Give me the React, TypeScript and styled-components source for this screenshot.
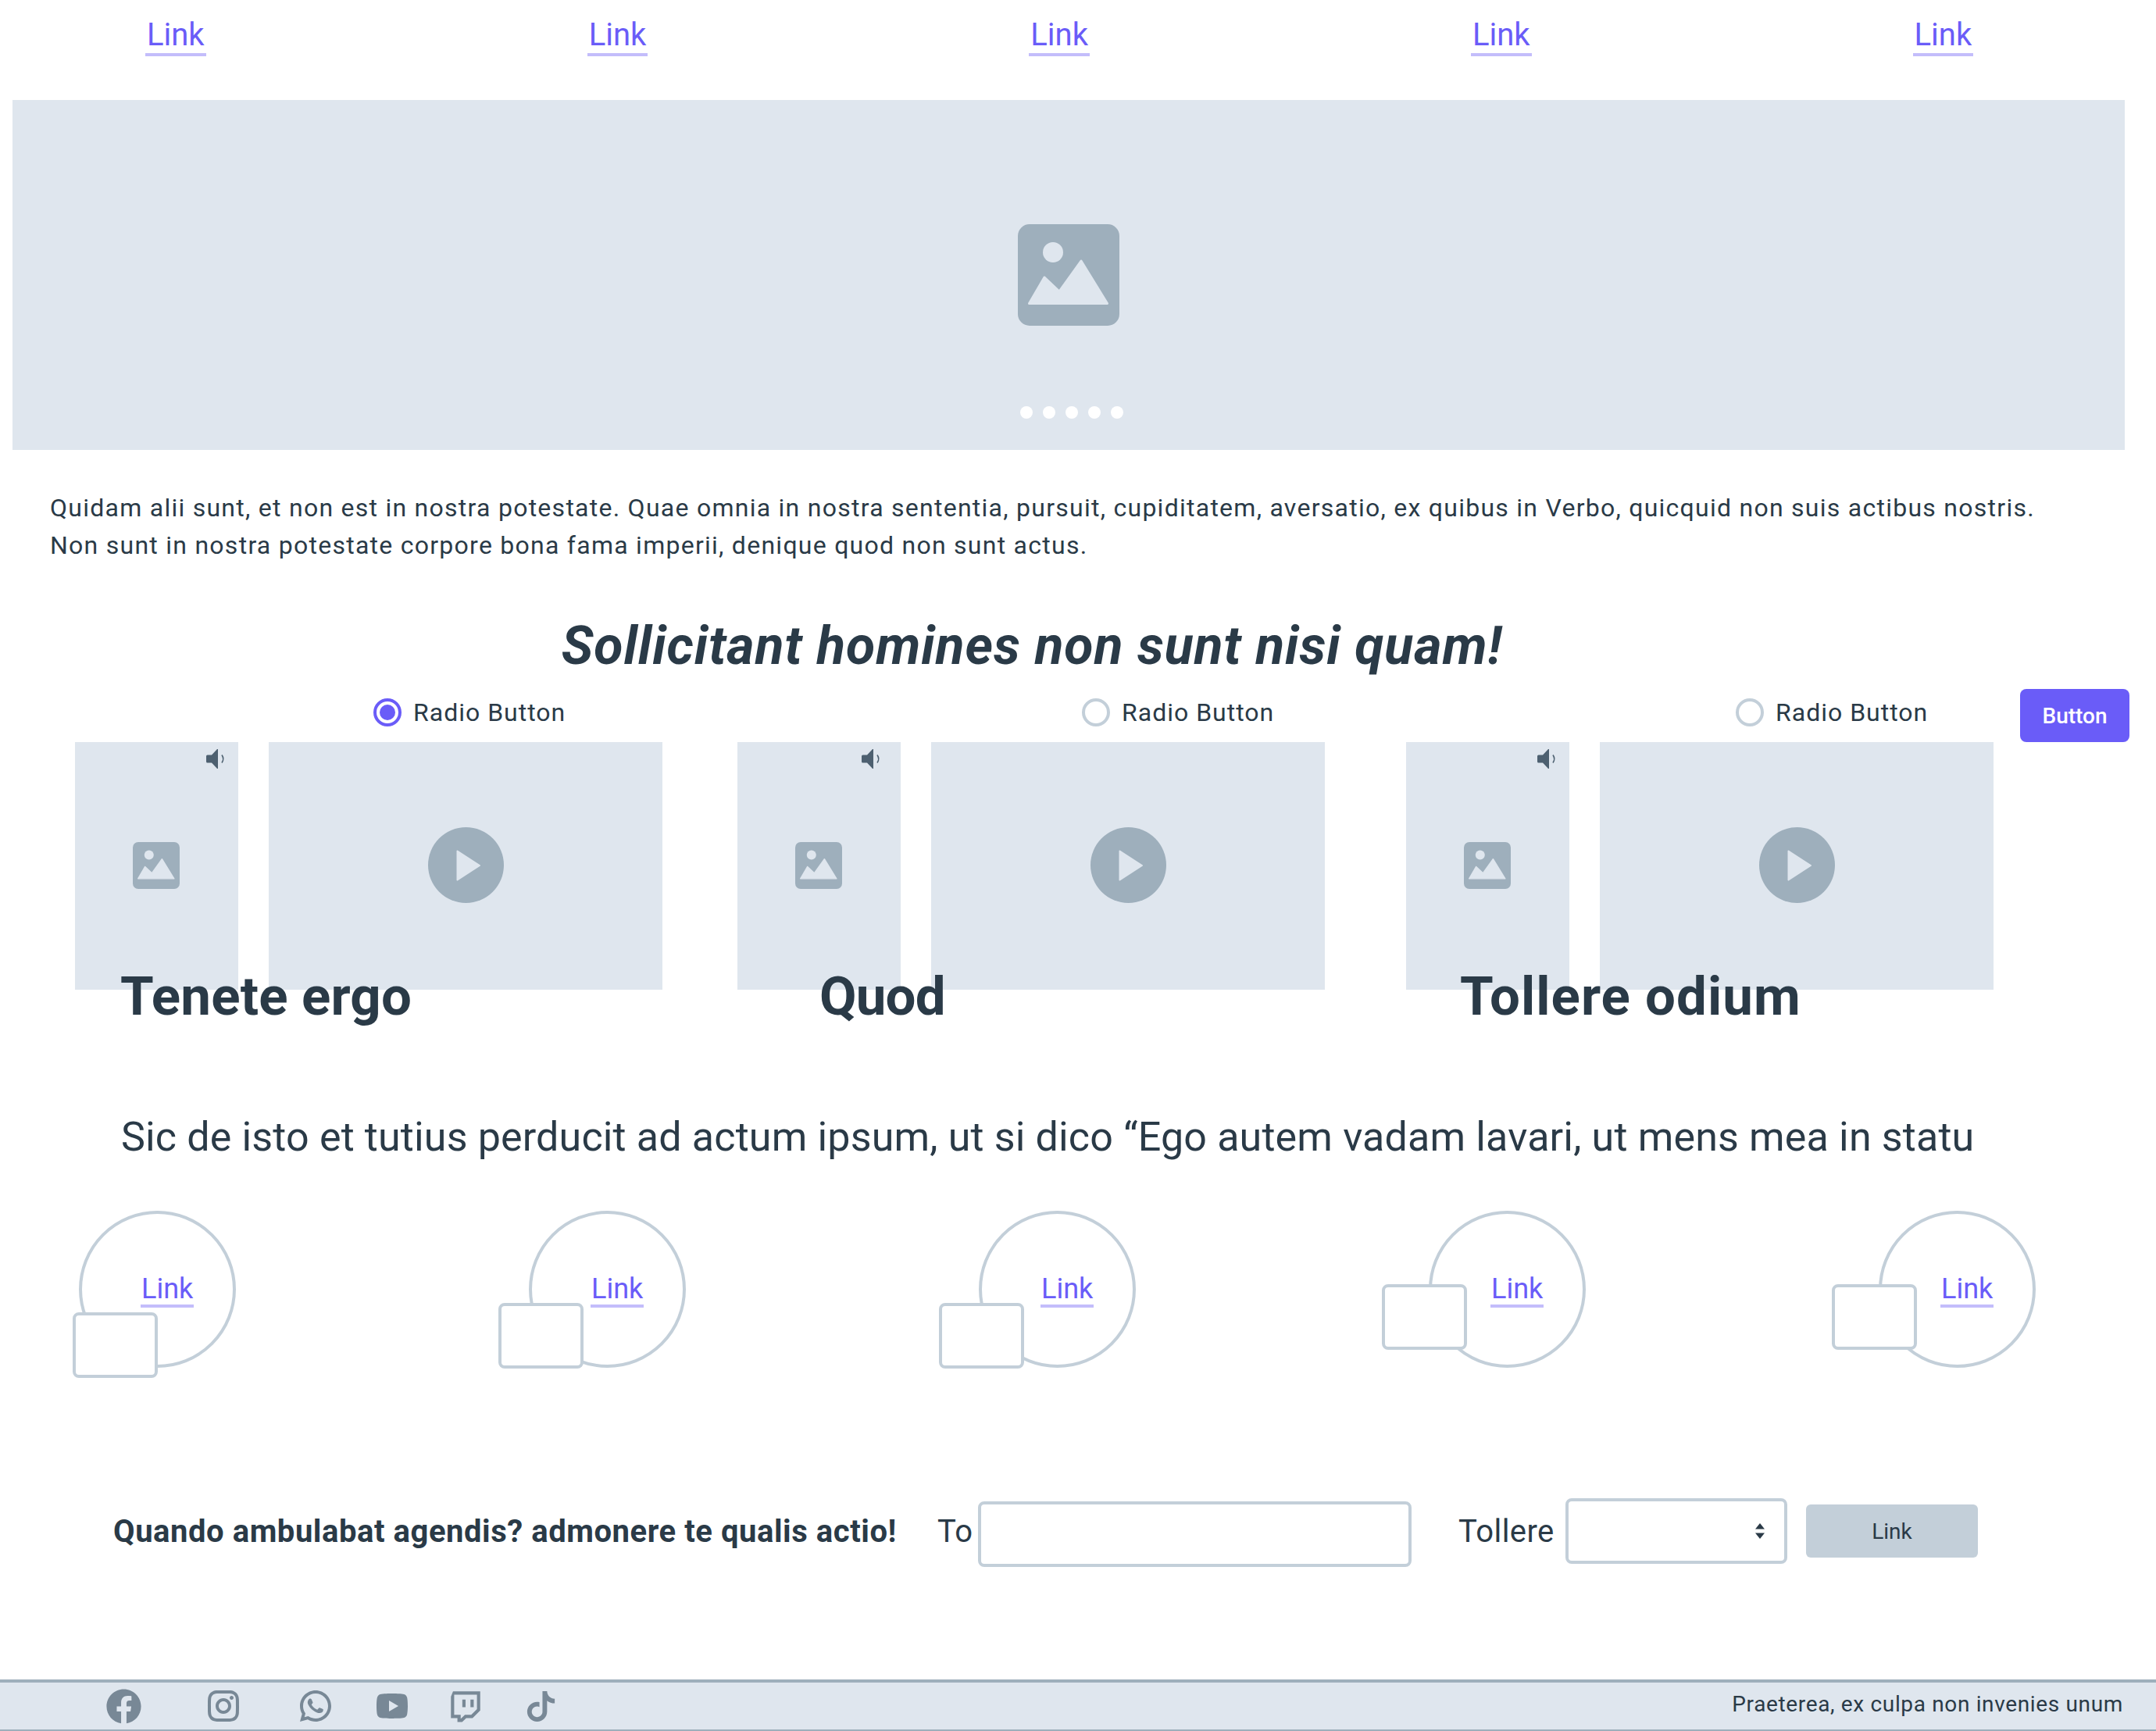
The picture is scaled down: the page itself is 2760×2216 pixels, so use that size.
import React from "react";
import styled, { createGlobalStyle } from "styled-components";
import {
  RiFacebookCircleFill,
  RiInstagramLine,
  RiWhatsappLine,
  RiYoutubeFill,
  RiTwitchLine,
  RiTiktokFill,
} from "react-icons/ri";

const INK = "#2a3a47";
const ACCENT = "#6a5cf8";
const UNDER = "#c3bdfb";
const PANEL = "#dfe6ee";
const ICON = "#9eafbc";
const LINE = "#c3cfd9";

const Global = createGlobalStyle`
  html, body { margin: 0; padding: 0; background: #fff; }
  body { font-family: Roboto, "Liberation Sans", sans-serif; color: ${INK}; }
  * { box-sizing: border-box; }
`;

const Page = styled.div`
  width: 2760px;
  height: 2216px;
  overflow: hidden;
  display: flex;
  flex-direction: column;
`;

const TextLink = styled.a`
  display: inline-block;
  color: ${ACCENT};
  font-size: 40px;
  line-height: 44px;
  padding: 0 2px 1px;
  border-bottom: 4px solid ${UNDER};
  text-align: center;
  text-decoration: none;
`;

const BadgeLink = styled(TextLink)`
  font-size: 36px;
  line-height: 40px;
  padding: 2px 1px 0;
`;

const TopNav = styled.nav`
  height: 128px;
  padding: 23px 0 0 186px;
  display: flex;
  gap: 488px;
  align-items: flex-start;
`;

const Hero = styled.section`
  position: relative;
  margin-left: 16px;
  width: 2704px;
  height: 448px;
  background: ${PANEL};
  display: flex;
  align-items: center;
  justify-content: center;
`;

const HeroDots = styled.div`
  position: absolute;
  left: 1290px;
  bottom: 40px;
  display: flex;
  gap: 13px;
`;

const Dot = styled.span`
  width: 16px;
  height: 16px;
  border-radius: 50%;
  background: #fff;
`;

const Intro = styled.p`
  margin: 50px 0 0 64px;
  width: 2600px;
  font-size: 32px;
  line-height: 48px;
  letter-spacing: 1.26px;
`;

const Headline = styled.h1`
  margin: 65px 0 0;
  padding-right: 118px;
  text-align: center;
  font-size: 68px;
  line-height: 80px;
  font-weight: 700;
  font-style: italic;
  letter-spacing: 0.9px;
`;

const ChoiceRow = styled.div`
  margin-top: 15px;
  padding-left: 478px;
  height: 68px;
  display: grid;
  grid-template-columns: 907px 837px 364px 140px;
`;

const Choice = styled.label`
  display: flex;
  align-items: center;
  gap: 15px;
  height: 60px;
  font-size: 32px;
  letter-spacing: 1px;
`;

const RadioMark = styled.span<{ $on?: boolean }>`
  width: 36px;
  height: 36px;
  border-radius: 50%;
  border: 4px solid ${(p) => (p.$on ? ACCENT : LINE)};
  display: flex;
  align-items: center;
  justify-content: center;
  &::after {
    content: "";
    width: 20px;
    height: 20px;
    border-radius: 50%;
    background: ${(p) => (p.$on ? ACCENT : "transparent")};
  }
`;

const PrimaryButton = styled.button`
  width: 140px;
  height: 68px;
  border: 0;
  border-radius: 8px;
  background: ${ACCENT};
  color: #fff;
  font-family: inherit;
  font-size: 28px;
  font-weight: 500;
`;

const GroupRow = styled.div`
  padding-left: 96px;
  display: grid;
  grid-template-columns: 848px 856px 752px;
`;

const Group = styled.article``;

const PanelPair = styled.div`
  display: flex;
  gap: 39px;
`;

const ThumbPanel = styled.div`
  position: relative;
  width: 209px;
  height: 317px;
  padding: 0 2px 2px 0;
  background: ${PANEL};
  display: flex;
  align-items: center;
  justify-content: center;
`;

const VideoPanel = styled.div`
  width: 504px;
  height: 317px;
  padding-bottom: 2px;
  background: ${PANEL};
  display: flex;
  align-items: center;
  justify-content: center;
`;

const SoundBadge = styled.span<{ $right: number }>`
  position: absolute;
  top: 9px;
  right: ${(p) => p.$right}px;
  display: flex;
`;

const PlayCircle = styled.span`
  width: 97px;
  height: 97px;
  border-radius: 50%;
  background: ${ICON};
  display: flex;
  align-items: center;
  justify-content: center;
`;

const GroupTitle = styled.h2<{ $indent: number; $track: number }>`
  position: relative;
  margin: -33px 0 0 ${(p) => p.$indent}px;
  font-size: 69px;
  line-height: 84px;
  font-weight: 700;
  letter-spacing: ${(p) => p.$track}px;
`;

const Lead = styled.p`
  margin: 102px 0 0 155px;
  font-size: 52px;
  line-height: 72px;
  white-space: nowrap;
  letter-spacing: 0.16px;
`;

const BadgeRow = styled.div`
  margin-top: 58px;
  padding-left: 101px;
  display: flex;
  gap: 375px;
`;

const Badge = styled.div`
  position: relative;
  width: 201px;
  height: 201px;
  border: 4px solid ${LINE};
  border-radius: 50%;
  padding-left: 75px;
  display: flex;
  align-items: center;
`;

const BadgeCard = styled.div<{ $x: number; $y: number }>`
  position: absolute;
  left: ${(p) => p.$x}px;
  top: ${(p) => p.$y}px;
  width: 109px;
  height: 84px;
  background: #fff;
  border: 4px solid ${LINE};
  border-radius: 8px;
`;

const QuoteForm = styled.form`
  margin-top: 165px;
  padding-left: 145px;
  display: flex;
  align-items: center;
  height: 88px;
`;

const FormTitle = styled.strong`
  width: 1055px;
  font-size: 40px;
  font-weight: 700;
  letter-spacing: 0.55px;
`;

const FieldLabel = styled.label<{ $w: number }>`
  width: ${(p) => p.$w}px;
  font-size: 40px;
  letter-spacing: 0.4px;
`;

const TextField = styled.input`
  width: 555px;
  height: 84px;
  margin: 8px 60px 0 0;
  border: 4px solid ${LINE};
  border-radius: 8px;
  background: #fff;
`;

const SelectWrap = styled.div`
  position: relative;
  width: 284px;
  height: 84px;
  margin-right: 24px;
`;

const SelectField = styled.select`
  width: 100%;
  height: 100%;
  appearance: none;
  border: 4px solid ${LINE};
  border-radius: 8px;
  background: #fff;
`;

const SelectArrows = styled.svg`
  position: absolute;
  right: 28px;
  top: 31px;
  pointer-events: none;
`;

const GhostButton = styled.button`
  width: 220px;
  height: 68px;
  border: 0;
  border-radius: 6px;
  background: ${LINE};
  color: ${INK};
  font-family: inherit;
  font-size: 28px;
`;

const Footer = styled.footer`
  margin-top: auto;
  height: 66px;
  border-top: 4px solid ${ICON};
  border-bottom: 2px solid ${ICON};
  background: ${PANEL};
  padding: 0 42px 0 132px;
  display: flex;
  align-items: center;
  justify-content: space-between;
`;

const SocialList = styled.div`
  display: flex;
  align-items: center;
  color: #788896;
`;

const SocialSlot = styled.span<{ $w: number }>`
  width: ${(p) => p.$w}px;
  display: flex;
`;

const FooterNote = styled.span`
  margin-bottom: 6px;
  font-size: 28px;
  letter-spacing: 0.65px;
`;

const ImageGlyph = ({ size }: { size: number }) => (
  <svg width={size} height={size} viewBox="0 0 130 130" aria-hidden="true">
    <rect width="130" height="130" rx="15" fill={ICON} />
    <circle cx="45" cy="36" r="13" fill={PANEL} />
    <path
      d="M14.5 101.5 L34 68 L53 86 L81 47 L114.5 101.5 Z"
      fill={PANEL}
      stroke={PANEL}
      strokeWidth="3"
      strokeLinejoin="round"
    />
  </svg>
);

const SpeakerGlyph = () => (
  <svg width="25" height="25" viewBox="0 0 25 25" aria-hidden="true">
    <path d="M0 9 Q0 7.5 1.5 7.5 H7 L14 0 H15 V25 H14 L7 17.5 H1.5 Q0 17.5 0 16 Z" fill="#4d6070" />
    <path d="M20 7.5 Q23.5 12.5 20 17.5" fill="none" stroke="#4d6070" strokeWidth="1.6" />
  </svg>
);

const PlayGlyphSvg = styled.svg`
  margin-left: 8px;
`;

const PlayGlyph = () => (
  <PlayGlyphSvg width="32" height="40" viewBox="0 0 32 40" aria-hidden="true">
    <path d="M1.5 1.5 L30 20 L1.5 38.5 Z" fill={PANEL} stroke={PANEL} strokeWidth="2" strokeLinejoin="round" />
  </PlayGlyphSvg>
);

const groups = [
  { title: "Tenete ergo", indent: 58, sound: 16, track: 0.2 },
  { title: "Quod", indent: 105, sound: 25, track: -0.8 },
  { title: "Tollere odium", indent: 69, sound: 16, track: 1.05 },
];

const badges = [
  { x: -12, y: 126 },
  { x: -43, y: 114 },
  { x: -55, y: 114 },
  { x: -64, y: 90 },
  { x: -64, y: 90 },
];

const socials = [
  { Icon: RiFacebookCircleFill, w: 130, size: 53 },
  { Icon: RiInstagramLine, w: 118, size: 48 },
  { Icon: RiWhatsappLine, w: 98, size: 48 },
  { Icon: RiYoutubeFill, w: 93, size: 48 },
  { Icon: RiTwitchLine, w: 98, size: 50 },
  { Icon: RiTiktokFill, w: 52, size: 47 },
];

export default function App() {
  return (
    <Page>
      <Global />
      <TopNav>
        {[0, 1, 2, 3, 4].map((i) => (
          <TextLink key={i} href="#">
            Link
          </TextLink>
        ))}
      </TopNav>
      <Hero>
        <ImageGlyph size={130} />
        <HeroDots>
          {[0, 1, 2, 3, 4].map((i) => (
            <Dot key={i} />
          ))}
        </HeroDots>
      </Hero>
      <Intro>
        Quidam alii sunt, et non est in nostra potestate. Quae omnia in nostra sententia, pursuit, cupiditatem,
        aversatio, ex quibus in Verbo, quicquid non suis actibus nostris. Non sunt in nostra potestate corpore bona
        fama imperii, denique quod non sunt actus.
      </Intro>
      <Headline>Sollicitant homines non sunt nisi quam!</Headline>
      <ChoiceRow>
        <Choice>
          <RadioMark $on />
          Radio Button
        </Choice>
        <Choice>
          <RadioMark />
          Radio Button
        </Choice>
        <Choice>
          <RadioMark />
          Radio Button
        </Choice>
        <PrimaryButton type="button">Button</PrimaryButton>
      </ChoiceRow>
      <GroupRow>
        {groups.map((g) => (
          <Group key={g.title}>
            <PanelPair>
              <ThumbPanel>
                <SoundBadge $right={g.sound}>
                  <SpeakerGlyph />
                </SoundBadge>
                <ImageGlyph size={60} />
              </ThumbPanel>
              <VideoPanel>
                <PlayCircle>
                  <PlayGlyph />
                </PlayCircle>
              </VideoPanel>
            </PanelPair>
            <GroupTitle $indent={g.indent} $track={g.track}>
              {g.title}
            </GroupTitle>
          </Group>
        ))}
      </GroupRow>
      <Lead>Sic de isto et tutius perducit ad actum ipsum, ut si dico “Ego autem vadam lavari, ut mens mea in statu</Lead>
      <BadgeRow>
        {badges.map((b, i) => (
          <Badge key={i}>
            <BadgeLink href="#">Link</BadgeLink>
            <BadgeCard $x={b.x} $y={b.y} />
          </Badge>
        ))}
      </BadgeRow>
      <QuoteForm>
        <FormTitle>Quando ambulabat agendis? admonere te qualis actio!</FormTitle>
        <FieldLabel $w={52}>To</FieldLabel>
        <TextField />
        <FieldLabel $w={137}>Tollere</FieldLabel>
        <SelectWrap>
          <SelectField />
          <SelectArrows width="14" height="22" viewBox="0 0 14 22" aria-hidden="true">
            <path d="M7 1 L13 8.5 H1 Z M1 13.5 H13 L7 21 Z" fill={INK} />
          </SelectArrows>
        </SelectWrap>
        <GhostButton type="button">Link</GhostButton>
      </QuoteForm>
      <Footer>
        <SocialList>
          {socials.map(({ Icon, w, size }, i) => (
            <SocialSlot key={i} $w={w}>
              <Icon size={size} />
            </SocialSlot>
          ))}
        </SocialList>
        <FooterNote>Praeterea, ex culpa non invenies unum</FooterNote>
      </Footer>
    </Page>
  );
}
